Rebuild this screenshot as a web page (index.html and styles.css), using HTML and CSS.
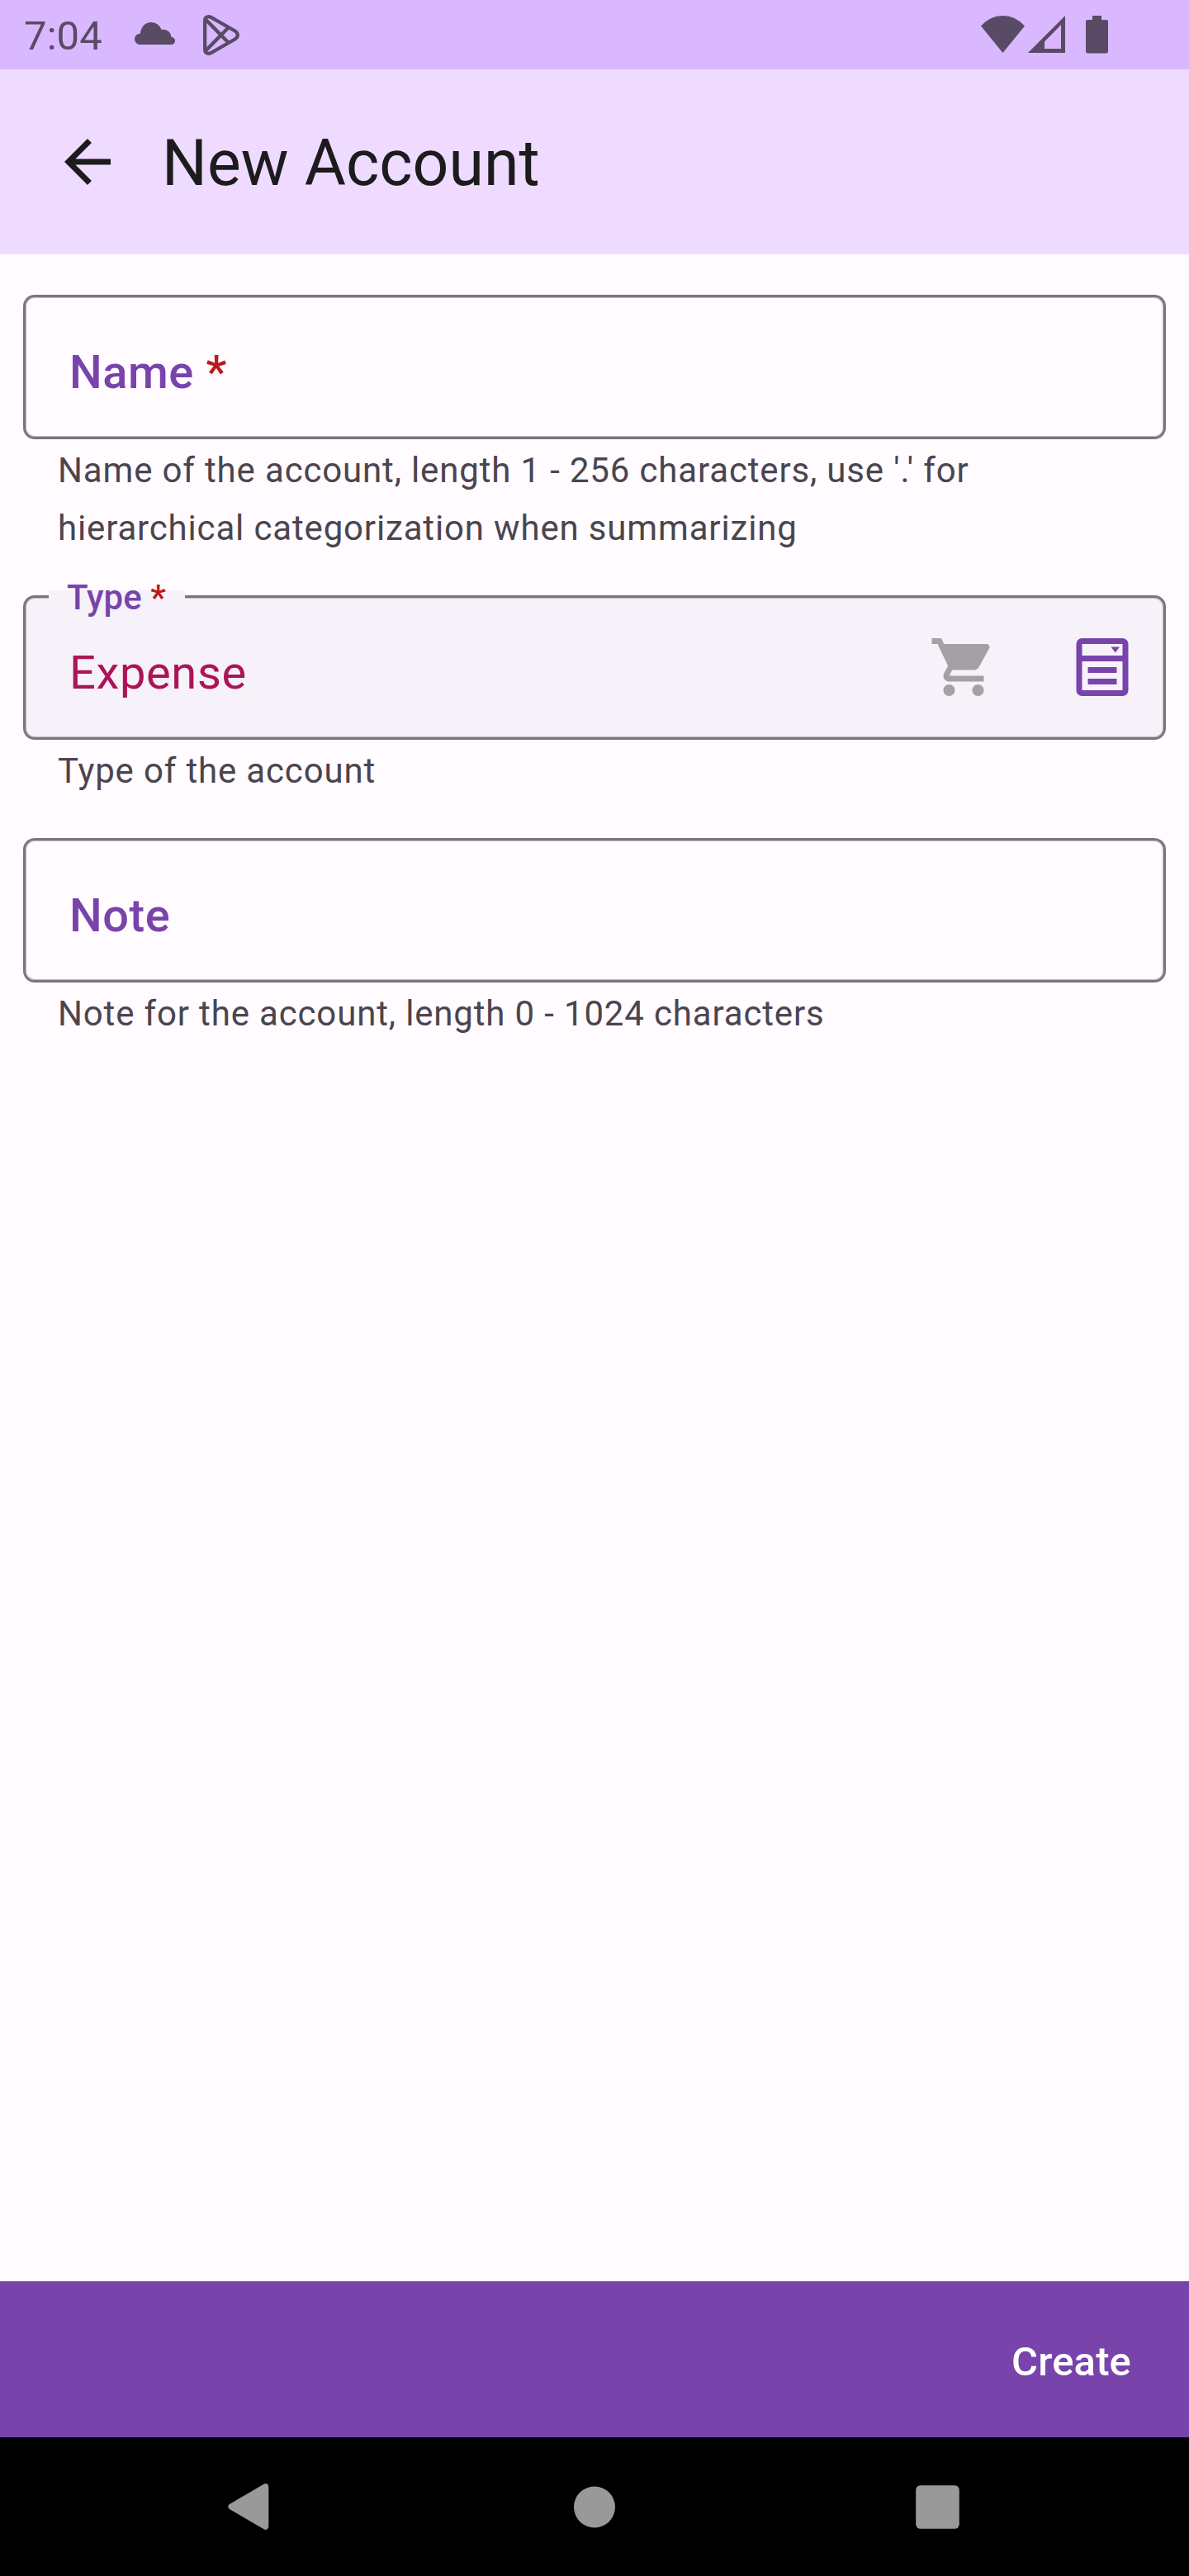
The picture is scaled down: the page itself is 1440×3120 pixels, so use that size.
FILE: index.html
```html
<!DOCTYPE html>
<html lang="en">
<head>
<meta charset="utf-8">
<title>New Account</title>
<link rel="stylesheet" href="styles.css">
</head>
<body>
<div class="screen">
  <div class="status">
    <span class="clock">7:04</span>
    <svg class="cloud" width="49" height="27" viewBox="0 0 49 27"><path d="M6.500 27A6.500 6.500 0 0 1 6.800 13.700C8 5 13 0 20 0C26 0 30.500 3.600 32.500 9C39 7.800 44 12 44.500 18A4.500 4.500 0 0 1 44.500 27Z"/></svg>
    <svg class="play" width="44" height="49" viewBox="0 0 44 49"><g fill="none" stroke="#594a66" stroke-width="4.300"><path d="M2.200 7Q2.200 2.200 7 2.200Q8 2.200 9.500 3L38.500 19.500Q41.800 21.700 41.800 24.500T38.500 29.500L9.500 46Q8 46.800 7 46.800Q2.200 46.800 2.200 42Z"/><path d="M3.500 6L31 34M3.500 43L31 15"/></g></svg>
    <span class="grow"></span>
    <svg class="wifi" width="53" height="45" viewBox="0 0 53 45"><path d="M0 12.500Q11 0 26.500 0T53 12.500L26.500 45Z"/></svg>
    <svg class="signal" width="45" height="45" viewBox="0 0 45 45"><path fill-rule="evenodd" d="M45 0V45H0ZM40 11L20 31.500V40H40Z"/></svg>
    <svg class="battery" width="27" height="46" viewBox="0 0 27 46"><path d="M8 0H19V5H24.500Q27 5 27 7.500V43Q27 45.500 24.500 45.500H2.500Q0 45.500 0 43V7.500Q0 5 2.500 5H8Z"/></svg>
  </div>
  <header class="appbar">
    <svg class="icon" viewBox="0 0 24 24"><path d="M20 11H7.830l5.590-5.590L12 4l-8 8 8 8 1.410-1.410L7.830 13H20v-2z"/></svg>
    <h1 class="title">New Account</h1>
  </header>
  <main class="form">
    <section class="field">
      <div class="box"><span class="label">Name <b class="req">*</b></span></div>
      <p class="help">Name of the account, length 1 - 256 characters, use '.' for hierarchical categorization when summarizing</p>
    </section>
    <section class="field">
      <div class="box filled">
        <span class="legend">Type <b class="req">*</b></span>
        <span class="value">Expense</span>
        <div class="actions">
          <svg class="icon cart" viewBox="0 0 24 24"><path d="M7 18c-1.100 0-1.990.9-1.990 2S5.900 22 7 22s2-.9 2-2-.9-2-2-2zM1 2v2h2l3.600 7.590-1.350 2.450c-.16.280-.25.610-.25.960 0 1.100.9 2 2 2h12v-2H7.420c-.14 0-.25-.11-.25-.25l.03-.12.900-1.630h7.450c.75 0 1.410-.41 1.750-1.030l3.580-6.490c.08-.14.120-.31.120-.480 0-.55-.45-1-1-1H5.210l-.94-2H1zm16 16c-1.100 0-1.990.9-1.990 2s.89 2 1.990 2 2-.9 2-2-.9-2-2-2z"/></svg>
          <svg class="icon picker" viewBox="0 0 24 24"><path fill-rule="evenodd" d="M5 2H19A2 2 0 0 1 21 4V20A2 2 0 0 1 19 22H5A2 2 0 0 1 3 20V4A2 2 0 0 1 5 2ZM5 4V8H19V4ZM5 10V20H19V10ZM7 12H17V14H7ZM7 16H17V18H7ZM15 5H18L16.500 7Z"/></svg>
        </div>
      </div>
      <p class="help">Type of the account</p>
    </section>
    <section class="field">
      <div class="box"><span class="label">Note</span></div>
      <p class="help">Note for the account, length 0 - 1024 characters</p>
    </section>
  </main>
  <footer class="bottombar"><span class="create">Create</span></footer>
  <nav class="navbar">
    <svg width="50" height="56" viewBox="0 0 50 56"><path d="M43.500 .7Q45 -.2 47 .3Q49.300 1 49.300 4V52Q49.300 55 47 55.700Q45 56.200 43.500 55.300L2 31Q-1.500 28 2 25Z"/></svg>
    <svg class="home" width="50" height="51" viewBox="0 0 50 51"><circle cx="25" cy="25.500" r="25"/></svg>
    <svg width="53" height="53" viewBox="0 0 53 53"><rect x=".2" y=".2" width="52.600" height="52.600" rx="5.500"/></svg>
  </nav>
</div>
</body>
</html>
```
FILE: styles.css
```css
* { box-sizing: border-box; }
body { margin: 0; font-family: Roboto, sans-serif; color: #1c1b1e; background: #fffbff; }
svg { display: block; flex: none; }
.screen { display: flex; flex-direction: column; width: 1440px; height: 3120px; }
.status { display: flex; align-items: flex-start; height: 84px; padding: 0 98px 0 28px; background: #dab8ff; color: #594a66; fill: #594a66; }
.clock { width: 135px; padding: 2px 0 0 1px; font-size: 49px; line-height: 84px; letter-spacing: .1px; }
.cloud { margin: 27px 34px 0 0; }
.play { margin-top: 18px; }
.grow { flex: 1; }
.wifi { margin: 19px 4px 0 0; }
.signal { margin: 19px 25px 0 0; }
.battery { margin-top: 19px; }
.icon { width: 84px; height: 84px; }
.appbar { display: flex; align-items: center; gap: 48px; height: 224px; padding-left: 64px; background: #efdbff; fill: #1c1b1e; }
.title { margin: 0; padding-top: 3px; font-size: 77px; font-weight: 400; line-height: 110px; }
.form { display: flex; flex: 1; flex-direction: column; gap: 46px; padding: 49px 28px 0; }
.box { position: relative; display: flex; height: 175px; padding: 49px 32px 0 53px; border: 3px solid #7b757f; border-radius: 14px; box-shadow: inset 0 0 0 1px #bdb8bf; }
.filled { background: #f7f2fa; }
.label, .value { font-size: 56px; line-height: 84px; letter-spacing: .55px; }
.label, .legend { color: #7844ab; font-weight: 500; }
.req { color: #ba1a1a; font-weight: inherit; }
.value { color: #ad1457; letter-spacing: .65px; }
.legend { position: absolute; left: 28px; top: -9px; width: 165px; height: 50px; padding-left: 22px; background: #f7f2fa; font-size: 42px; line-height: 17px; white-space: nowrap; }
.actions { display: flex; gap: 84px; margin: -7px 0 0 auto; }
.cart { fill: #a59fa6; }
.picker { fill: #7844ab; }
.help { margin: 3px 0 0; padding: 0 42px; color: #4a454e; font-size: 42px; line-height: 70px; letter-spacing: .84px; }
.bottombar { display: flex; justify-content: flex-end; height: 189px; padding: 3px 70px 0 0; background: #7844ab; }
.create { color: #fff; font-size: 49px; font-weight: 500; line-height: 189px; letter-spacing: .15px; }
.navbar { display: flex; align-items: center; height: 168px; padding-left: 276px; background: #000; fill: #999; }
.home { margin: 0 364px 0 369px; }
```
